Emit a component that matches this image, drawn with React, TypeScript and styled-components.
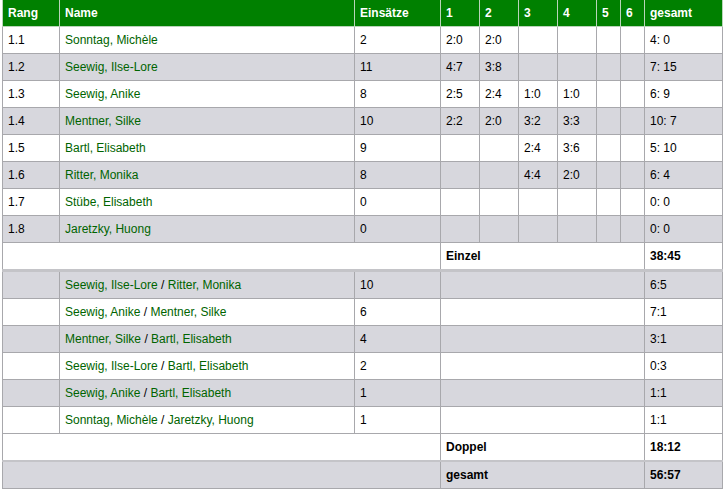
import styled, { createGlobalStyle } from 'styled-components';

const GlobalStyle = createGlobalStyle`
    body {
        margin: 0;
        background: #fff;
        font-family: "Liberation Sans", Arial, sans-serif;
    }
`

const Wrap = styled.div`
    padding: 0 3px 0 2px;
`

const Table = styled.table`
    width: 720px;
    border-collapse: collapse;
    table-layout: fixed;
    font-size: 12px;
    color: #000;
`

const HeadCell = styled.th`
    background: #008000;
    color: #fff;
    font-weight: bold;
    text-align: left;
    height: 26px;
    padding: 0 5px;
    border: 1px solid #b9d4b9;
    border-top: none;
`

const Row = styled.tr<{ $gray?: boolean; $split?: number }>`
    background: ${p => (p.$gray ? '#d7d7dd' : '#fff')};
    ${p => p.$split && `border-top: ${p.$split}px solid #c4c4c8;`}
`

const Cell = styled.td<{ $bold?: boolean }>`
    height: 26px;
    padding: 0 5px;
    border: 1px solid #a8a8ac;
    white-space: nowrap;
    font-weight: ${p => (p.$bold ? 'bold' : 'normal')};
`

const Player = styled.span`
    color: #006400;
`

const widths = [57, 295, 86, 39, 39, 39, 39, 24, 24, 78];
const heads = ['Rang', 'Name', 'Einsätze', '1', '2', '3', '4', '5', '6', 'gesamt'];

const singles = [
    { rang: '1.1', name: 'Sonntag, Michèle', n: '2', sets: ['2:0', '2:0', '', '', '', ''], total: '4: 0' },
    { rang: '1.2', name: 'Seewig, Ilse-Lore', n: '11', sets: ['4:7', '3:8', '', '', '', ''], total: '7: 15' },
    { rang: '1.3', name: 'Seewig, Anike', n: '8', sets: ['2:5', '2:4', '1:0', '1:0', '', ''], total: '6: 9' },
    { rang: '1.4', name: 'Mentner, Silke', n: '10', sets: ['2:2', '2:0', '3:2', '3:3', '', ''], total: '10: 7' },
    { rang: '1.5', name: 'Bartl, Elisabeth', n: '9', sets: ['', '', '2:4', '3:6', '', ''], total: '5: 10' },
    { rang: '1.6', name: 'Ritter, Monika', n: '8', sets: ['', '', '4:4', '2:0', '', ''], total: '6: 4' },
    { rang: '1.7', name: 'Stübe, Elisabeth', n: '0', sets: ['', '', '', '', '', ''], total: '0: 0' },
    { rang: '1.8', name: 'Jaretzky, Huong', n: '0', sets: ['', '', '', '', '', ''], total: '0: 0' },
];

const doubles = [
    { a: 'Seewig, Ilse-Lore', b: 'Ritter, Monika', n: '10', total: '6:5' },
    { a: 'Seewig, Anike', b: 'Mentner, Silke', n: '6', total: '7:1' },
    { a: 'Mentner, Silke', b: 'Bartl, Elisabeth', n: '4', total: '3:1' },
    { a: 'Seewig, Ilse-Lore', b: 'Bartl, Elisabeth', n: '2', total: '0:3' },
    { a: 'Seewig, Anike', b: 'Bartl, Elisabeth', n: '1', total: '1:1' },
    { a: 'Sonntag, Michèle', b: 'Jaretzky, Huong', n: '1', total: '1:1' },
];

const App: React.FC = () => {
    return (
        <Wrap>
            <GlobalStyle />
            <Table>
                <colgroup>
                    {widths.map((w, i) => <col key={i} style={{ width: w }} />)}
                </colgroup>
                <thead>
                    <tr>
                        {heads.map(h => <HeadCell key={h}>{h}</HeadCell>)}
                    </tr>
                </thead>
                <tbody>
                    {singles.map((s, i) => (
                        <Row key={s.rang} $gray={i % 2 === 1}>
                            <Cell>{s.rang}</Cell>
                            <Cell><Player>{s.name}</Player></Cell>
                            <Cell>{s.n}</Cell>
                            {s.sets.map((v, j) => <Cell key={j}>{v}</Cell>)}
                            <Cell>{s.total}</Cell>
                        </Row>
                    ))}
                    <Row>
                        <Cell colSpan={3}></Cell>
                        <Cell colSpan={6} $bold>Einzel</Cell>
                        <Cell $bold>38:45</Cell>
                    </Row>
                    {doubles.map((d, i) => (
                        <Row key={i} $gray={i % 2 === 0} $split={i === 0 ? 3 : 0}>
                            <Cell></Cell>
                            <Cell><Player>{d.a}</Player> / <Player>{d.b}</Player></Cell>
                            <Cell>{d.n}</Cell>
                            <Cell colSpan={6}></Cell>
                            <Cell>{d.total}</Cell>
                        </Row>
                    ))}
                    <Row>
                        <Cell colSpan={3}></Cell>
                        <Cell colSpan={6} $bold>Doppel</Cell>
                        <Cell $bold>18:12</Cell>
                    </Row>
                    <Row $gray $split={2}>
                        <Cell colSpan={3}></Cell>
                        <Cell colSpan={6} $bold>gesamt</Cell>
                        <Cell $bold>56:57</Cell>
                    </Row>
                </tbody>
            </Table>
        </Wrap>
    );
}

export default App;
